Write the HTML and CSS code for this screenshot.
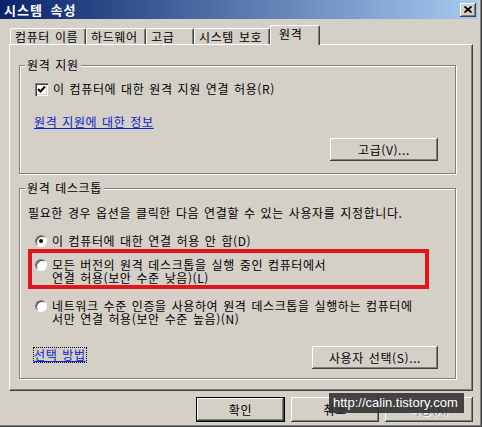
FILE: index.html
```html
<!DOCTYPE html>
<html lang="ko">
<head>
<meta charset="utf-8">
<title>시스템 속성</title>
<link rel="stylesheet" href="styles.css">
</head>
<body>
<div class="window">
  <div class="titlebar">
    <span class="title">시스템 속성</span>
    <span class="close"><svg width="8" height="7" viewBox="0 0 8 7"><path d="M0.5 0.5L7.5 6.5M7.5 0.5L0.5 6.5" stroke="#000" stroke-width="1.8" fill="none"/></svg></span>
  </div>
  <div class="tabs">
    <div class="tab w76">컴퓨터 이름</div>
    <div class="tab w60">하드웨어</div>
    <div class="tab w48">고급</div>
    <div class="tab w76">시스템 보호</div>
    <div class="tab active">원격</div>
  </div>
  <div class="panel">
    <div class="group g1">
      <span class="legend">원격 지원</span>
      <div class="opt">
        <span class="checkbox"><svg width="9" height="9" viewBox="0 0 9 9"><polyline points="1,4 3.5,6.5 8,1.5" stroke="#000" stroke-width="2" fill="none"/></svg></span>
        <span>이 컴퓨터에 대한 원격 지원 연결 허용(R)</span>
      </div>
      <a class="link link-info" href="#">원격 지원에 대한 정보</a>
      <div class="btnrow">
        <button class="btn btn-adv" type="button">고급(V)...</button>
      </div>
    </div>
    <div class="group g2">
      <span class="legend">원격 데스크톱</span>
      <div class="desc">필요한 경우 옵션을 클릭한 다음 연결할 수 있는 사용자를 지정합니다.</div>
      <div class="ropt r1">
        <span class="radio checked"></span>
        <span>이 컴퓨터에 대한 연결 허용 안 함(D)</span>
      </div>
      <div class="highlight">
        <div class="ropt">
          <span class="radio"></span>
          <span>모든 버전의 원격 데스크톱을 실행 중인 컴퓨터에서<br>연결 허용(보안 수준 낮음)(L)</span>
        </div>
      </div>
      <div class="ropt r3">
        <span class="radio"></span>
        <span>네트워크 수준 인증을 사용하여 원격 데스크톱을 실행하는 컴퓨터에<br>서만 연결 허용(보안 수준 높음)(N)</span>
      </div>
      <div class="bottomrow">
        <a class="link focus" href="#">선택 방법</a>
        <button class="btn btn-users" type="button">사용자 선택(S)...</button>
      </div>
    </div>
  </div>
  <div class="footer">
    <button class="btn fbtn default" type="button">확인</button>
    <button class="btn fbtn w88" type="button">취소</button>
    <button class="btn fbtn w88 disabled" type="button">적용(A)</button>
  </div>
  <div class="watermark">http://calin.tistory.com</div>
</div>
</body>
</html>
```

FILE: styles.css
```css
* { box-sizing: border-box; }
html, body { margin: 0; padding: 0; }
body {
  width: 482px;
  height: 427px;
  overflow: hidden;
  background: #d4d0c8;
  font-family: "Noto Sans CJK KR", "Liberation Sans", sans-serif;
  font-size: 12px;
  letter-spacing: 0.6px;
  color: #000;
}
.window {
  position: relative;
  width: 482px;
  height: 427px;
  background: #d4d0c8;
  box-shadow: inset -1px -1px #404040, inset -2px -2px #808080;
  display: flex;
  flex-direction: column;
}
.titlebar {
  width: 478px;
  height: 19px;
  flex: none;
  background: linear-gradient(to right, #0a246a, #a6caf0);
  display: flex;
  align-items: center;
  justify-content: space-between;
  padding: 0 2px 0 4px;
}
.title {
  color: #fff;
  font-weight: bold;
  font-size: 13px;
  line-height: 15px;
  letter-spacing: 1px;
  word-spacing: 3px;
}
.close {
  width: 16px;
  height: 14px;
  background: #d4d0c8;
  box-shadow: inset -1px -1px #404040, inset 1px 1px #fff, inset -2px -2px #808080;
  display: flex;
  align-items: center;
  justify-content: center;
}
.close svg { display: block; }
.tabs {
  display: flex;
  align-items: flex-end;
  margin-top: 6px;
  padding-left: 10px;
  height: 19px;
  flex: none;
  position: relative;
  z-index: 1;
}
.tab {
  height: 16px;
  border-top: 1px solid #fff;
  border-left: 1px solid #fff;
  border-right: 1px solid #404040;
  box-shadow: inset -1px 0 #808080;
  border-radius: 2px 2px 0 0;
  display: flex;
  align-items: center;
  justify-content: flex-start;
  line-height: 14px;
  padding: 1px 0 0 4px;
  word-spacing: 1px;
}
.w76 { width: 76px; }
.w60 { width: 60px; }
.w48 { width: 48px; }
.tab.active {
  width: 50px;
  height: 20px;
  margin-bottom: -1px;
  background: #d4d0c8;
  padding: 0 0 3px 8px;
}
.panel {
  margin-left: 9px;
  width: 464px;
  height: 347px;
  flex: none;
  border-top: 1px solid #fff;
  border-left: 1px solid #fff;
  border-right: 1px solid #404040;
  border-bottom: 1px solid #404040;
  box-shadow: inset -1px -1px #808080;
  padding: 20px 0 0 9px;
}
.group {
  position: relative;
  width: 437px;
  border: 1px solid #808080;
  box-shadow: inset 1px 1px #fff, 1px 1px #fff;
  line-height: 14px;
  word-spacing: 1px;
}
.legend {
  position: absolute;
  top: -8px;
  left: 5px;
  padding: 0 2px;
  background: #d4d0c8;
  line-height: 14px;
}
.g1 {
  height: 109px;
  padding: 16px 0 0 15px;
}
.opt {
  display: flex;
  align-items: center;
  height: 14px;
  gap: 5px;
}
.checkbox {
  width: 13px;
  height: 13px;
  flex: none;
  background: #fff;
  box-shadow: inset 1px 1px #808080, inset 2px 2px #404040, inset -1px -1px #fff, inset -2px -2px #d4d0c8;
  display: flex;
  align-items: center;
  justify-content: center;
}
.checkbox svg { display: block; }
.link {
  color: #0b24c8;
  text-decoration: underline;
}
.link-info {
  display: inline-block;
  margin-top: 19px;
  margin-left: -1px;
}
.btnrow {
  display: flex;
  justify-content: flex-end;
  margin-top: 9px;
  padding-right: 17px;
}
.btn {
  font: inherit;
  font-size: 12px;
  letter-spacing: 0.6px;
  color: #000;
  background: #d4d0c8;
  border: none;
  border-radius: 0;
  padding: 0;
  box-shadow: inset -1px -1px #404040, inset 1px 1px #fff, inset -2px -2px #808080;
  line-height: 14px;
  word-spacing: 1px;
}
.btn-adv { width: 108px; height: 23px; }
.g2 {
  height: 191px;
  margin-top: 14px;
  padding: 17px 0 0 8px;
}
.desc { height: 14px; white-space: nowrap; }
.ropt {
  display: flex;
  align-items: flex-start;
  gap: 5px;
  line-height: 13px;
  white-space: nowrap;
}
.r1 {
  margin-top: 14px;
  margin-left: 7px;
  line-height: 14px;
}
.radio {
  width: 12px;
  height: 12px;
  flex: none;
  margin-top: 1px;
  border-radius: 50%;
  background: #fff;
  border: 1px solid;
  border-color: #808080 #fff #fff #808080;
  box-shadow: inset 1px 1px #404040;
  display: flex;
  align-items: center;
  justify-content: center;
}
.radio.checked::after {
  content: "";
  width: 4px;
  height: 4px;
  border-radius: 50%;
  background: #000;
}
.highlight {
  width: 401px;
  height: 40px;
  margin-top: 1px;
  border: 4px solid #e3141c;
  padding: 5px 0 0 3px;
}
.r3 {
  margin-top: 10px;
  margin-left: 7px;
}
.bottomrow {
  display: flex;
  justify-content: space-between;
  align-items: flex-start;
  margin-top: 21px;
  padding-right: 17px;
}
.focus {
  margin-top: 2px;
  margin-left: 6px;
  outline: 1px dotted #000;
  outline-offset: 0;
}
.btn-users { width: 126px; height: 23px; }
.footer {
  display: flex;
  justify-content: flex-end;
  gap: 6px;
  margin-top: 6px;
  padding-right: 9px;
}
.fbtn { width: 89px; height: 25px; }
.w88 { width: 88px; }
.default {
  box-shadow: inset 0 0 0 1px #000, inset -2px -2px #404040, inset 2px 2px #fff, inset -3px -3px #808080;
}
.disabled {
  color: #808080;
  text-shadow: 1px 1px #fff;
}
.watermark {
  position: absolute;
  left: 329px;
  top: 393px;
  width: 135px;
  height: 20px;
  background: rgba(45, 45, 45, 0.88);
  color: #fff;
  font-family: "Liberation Sans", Arial, sans-serif;
  font-size: 13px;
  letter-spacing: 0;
  line-height: 20px;
  padding-left: 4px;
}
```
